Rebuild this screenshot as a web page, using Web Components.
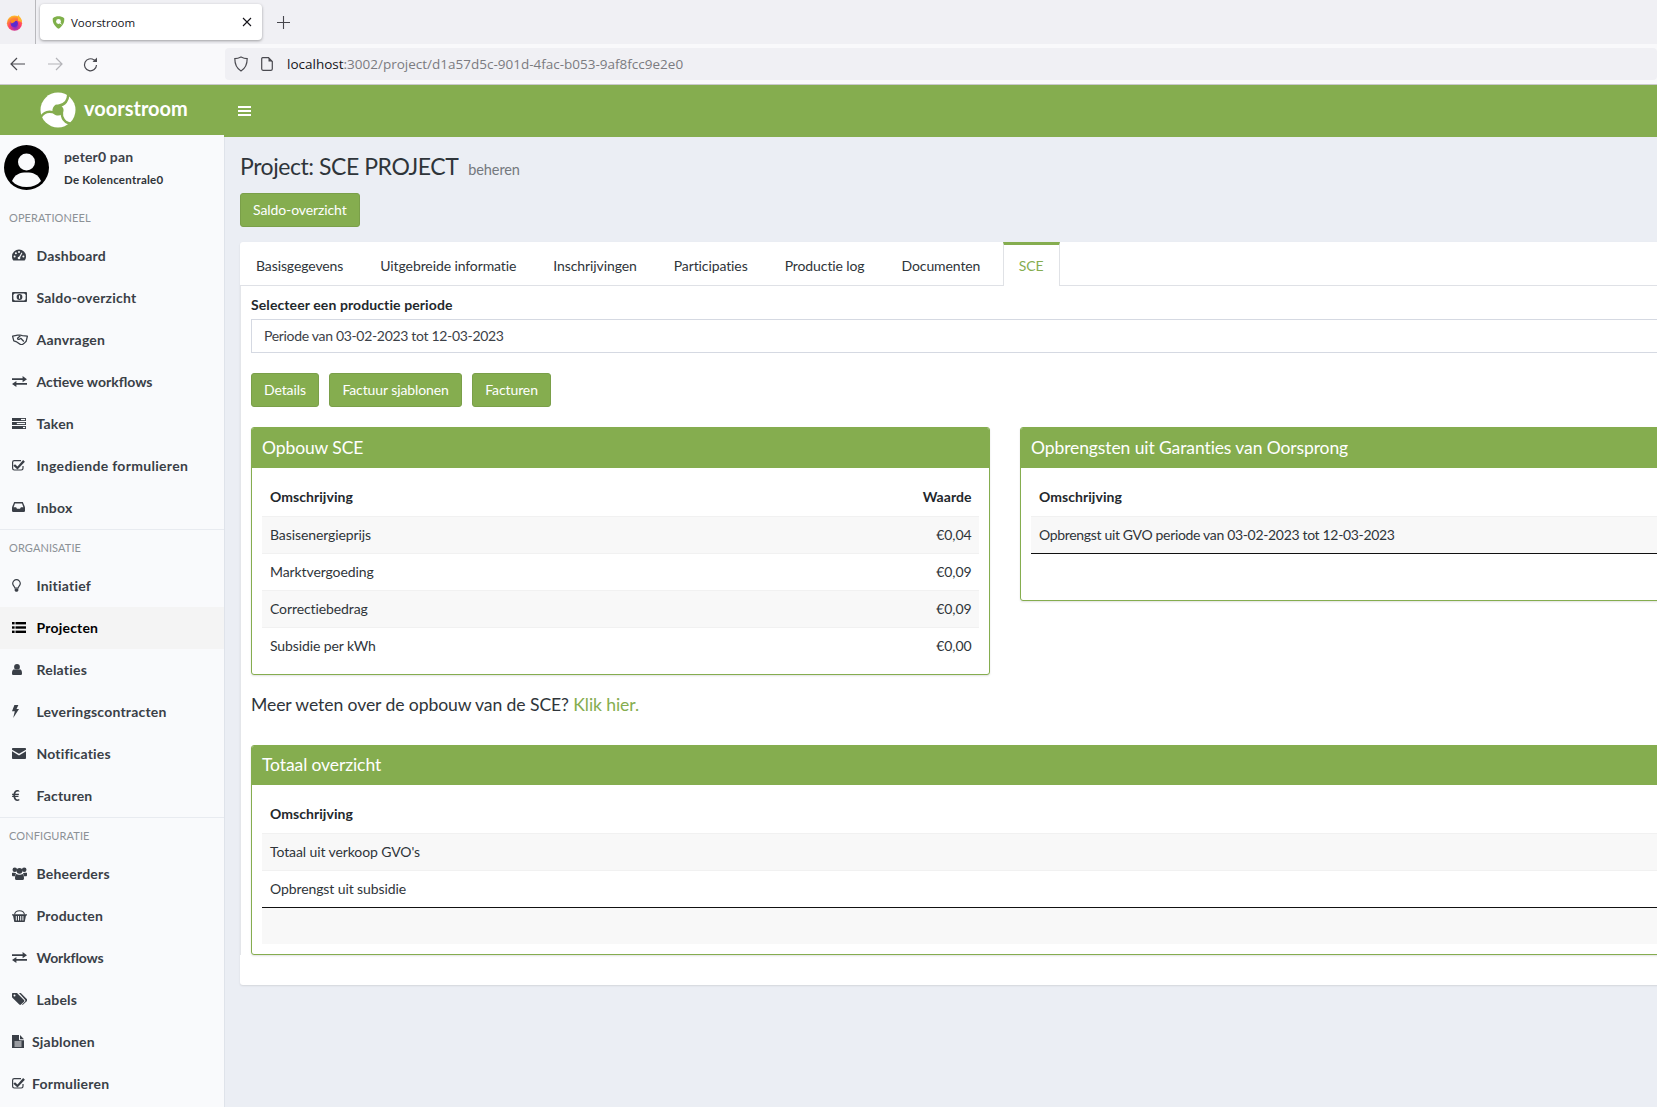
<!DOCTYPE html>
<html lang="nl"><head><meta charset="utf-8"><title>Voorstroom</title>
<style>
html,body{margin:0;padding:0;width:1657px;height:1107px;overflow:hidden;background:#ebeef4}
body{font-family:"Lato","Noto Sans",sans-serif;font-size:14px;color:#2f353a;display:flex;flex-direction:column;letter-spacing:-.1px}
</style></head><body>
<browser-chrome></browser-chrome>
<app-shell>
  <side-nav slot="side">
    <nav-user slot="user" name="peter0 pan" org="De Kolencentrale0"></nav-user>
    <nav-title>OPERATIONEEL</nav-title>
    <nav-item icon="dashboard">Dashboard</nav-item>
    <nav-item icon="money">Saldo-overzicht</nav-item>
    <nav-item icon="handshake">Aanvragen</nav-item>
    <nav-item icon="exchange" style="letter-spacing:0">Actieve workflows</nav-item>
    <nav-item icon="tasks">Taken</nav-item>
    <nav-item icon="check" style="letter-spacing:.3px">Ingediende formulieren</nav-item>
    <nav-item icon="inbox">Inbox</nav-item>
    <nav-title rule>ORGANISATIE</nav-title>
    <nav-item icon="bulb">Initiatief</nav-item>
    <nav-item icon="list" active>Projecten</nav-item>
    <nav-item icon="user">Relaties</nav-item>
    <nav-item icon="bolt">Leveringscontracten</nav-item>
    <nav-item icon="envelope">Notificaties</nav-item>
    <nav-item icon="euro">Facturen</nav-item>
    <nav-title rule>CONFIGURATIE</nav-title>
    <nav-item icon="users">Beheerders</nav-item>
    <nav-item icon="basket">Producten</nav-item>
    <nav-item icon="exchange" style="letter-spacing:-.15px">Workflows</nav-item>
    <nav-item icon="tags">Labels</nav-item>
    <nav-item icon="file" tight>Sjablonen</nav-item>
    <nav-item icon="check" tight>Formulieren</nav-item>
  </side-nav>
  <page-title sub="beheren">Project: SCE PROJECT</page-title>
  <green-btn>Saldo-overzicht</green-btn>
  <tab-card>
    <tab-item slot="tabs">Basisgegevens</tab-item>
    <tab-item slot="tabs">Uitgebreide informatie</tab-item>
    <tab-item slot="tabs">Inschrijvingen</tab-item>
    <tab-item slot="tabs">Participaties</tab-item>
    <tab-item slot="tabs">Productie log</tab-item>
    <tab-item slot="tabs">Documenten</tab-item>
    <tab-item slot="tabs" active>SCE</tab-item>

    <period-select label="Selecteer een productie periode">Periode van 03-02-2023 tot 12-03-2023</period-select>
    <btn-row><green-btn>Details</green-btn><green-btn>Factuur sjablonen</green-btn><green-btn>Facturen</green-btn></btn-row>
    <panel-row>
      <green-panel heading="Opbouw SCE">
        <t-row head><t-cell>Omschrijving</t-cell><t-cell end>Waarde</t-cell></t-row>
        <t-row odd><t-cell>Basisenergieprijs</t-cell><t-cell end>€0,04</t-cell></t-row>
        <t-row><t-cell>Marktvergoeding</t-cell><t-cell end>€0,09</t-cell></t-row>
        <t-row odd><t-cell>Correctiebedrag</t-cell><t-cell end>€0,09</t-cell></t-row>
        <t-row><t-cell>Subsidie per kWh</t-cell><t-cell end>€0,00</t-cell></t-row>
      </green-panel>
      <green-panel heading="Opbrengsten uit Garanties van Oorsprong">
        <t-row head><t-cell>Omschrijving</t-cell></t-row>
        <t-row odd><t-cell style="letter-spacing:-.33px">Opbrengst uit GVO periode van 03-02-2023 tot 12-03-2023</t-cell></t-row>
        <t-row total></t-row>
      </green-panel>
    </panel-row>
    <info-line>Meer weten over de opbouw van de SCE? <a slot="link">Klik hier.</a></info-line>
    <green-panel heading="Totaal overzicht" style="--head:39px">
      <t-row head><t-cell>Omschrijving</t-cell></t-row>
      <t-row odd><t-cell>Totaal uit verkoop GVO's</t-cell></t-row>
      <t-row><t-cell>Opbrengst uit subsidie</t-cell></t-row>
      <t-row total odd></t-row>
    </green-panel>
  </tab-card>
</app-shell>
<script>
function def(name,css,html){
  customElements.define(name,class extends HTMLElement{
    connectedCallback(){
      if(this.shadowRoot)return;
      const r=this.attachShadow({mode:'open'});
      const h=typeof html==='function'?html(this):html;
      r.innerHTML='<style>'+css+'</style>'+h;
    }
  });
}
const BG='var(--ibg,#f9fafc)';
const ICONS={
dashboard:[14,12,`<path d="M7 .5A7 7 0 0 0 0 7.5c0 1.6.5 3 1.4 4h11.2c.9-1 1.4-2.4 1.4-4A7 7 0 0 0 7 .5z"/><g fill="${BG}"><circle cx="2.600" cy="7.600" r="1"/><circle cx="3.900" cy="4.200" r="1"/><circle cx="7" cy="2.900" r="1"/><circle cx="11.400" cy="7.600" r="1"/><circle cx="7" cy="9" r="1.300"/><path d="M6.600 8.400 9.600 3.600l.8.4-2.600 5z"/></g>`],
money:[15,10,`<rect width="15" height="10" rx="1"/><rect x="1.400" y="1.400" width="12.200" height="7.200" rx="1.800" fill="${BG}"/><circle cx="7.500" cy="5" r="2.900"/><rect x="7" y="3.400" width="1.100" height="3.300" fill="${BG}"/>`],
handshake:[16,11,`<g fill="none" stroke="currentColor" stroke-width="1.250" stroke-linejoin="round"><path d="M.6 2.200 3.200 1.600 5.600 1.200 8 1l2.400.6 2.400.2 2.600.4-1.200 5-2.400 2.400-1.600 1.100-1.600-.1L4 7.600 1.800 6.800z"/><path d="M8.400 1.800 5.800 4c-.8.9.5 1.900 1.600 1.200l1.400-.9 3 3.200"/></g>`],
exchange:[15,11,`<path d="M0 2.200h10.600V0L15 3.200l-4.400 3.100V4.100H0zM15 6.900H4.400V4.900L0 8l4.400 3V8.800H15z"/>`],
tasks:[14,11,`<rect width="14" height="3"/><rect y="4" width="14" height="3"/><rect y="8" width="14" height="3"/><g fill="${BG}"><rect x="9" y=".9" width="4.100" height="1.200"/><rect x="4.800" y="4.900" width="8.300" height="1.200"/><rect x="11" y="8.900" width="2.100" height="1.200"/></g>`],
check:[13,12,`<path fill="none" stroke="currentColor" stroke-width="1.200" d="M11 6.900V9.300A1.700 1.700 0 0 1 9.300 11H2.300A1.700 1.700 0 0 1 .6 9.300V3.300A1.700 1.700 0 0 1 2.300 1.600H9"/><path d="M3 5.200 5.500 7.600 11.100 1 12.900 2.700 5.500 10.600 1.300 6.800z"/>`],
inbox:[13,10,`<path d="M2.200 0H10.800L13 5.200V8.800A1.200 1.200 0 0 1 11.800 10H1.200A1.200 1.200 0 0 1 0 8.800V5.200z"/><path fill="${BG}" d="M3 1.400H10L11.400 5.200H8.900L8 6.800H5L4.100 5.200H1.600z"/>`],
bulb:[9,13,`<path fill="none" stroke="currentColor" stroke-width="1.200" d="M4.500.7A3.800 3.800 0 0 0 .7 4.500C.7 6.600 2.600 7.400 2.900 9H6.100C6.400 7.400 8.300 6.600 8.300 4.500A3.800 3.800 0 0 0 4.500.7z"/><path d="M2.700 9.500H6.300V11.600L5.400 12.800H3.600L2.700 11.600z"/>`],
list:[14,11,`<rect width="2.600" height="2.400"/><rect y="4.300" width="2.600" height="2.400"/><rect y="8.600" width="2.600" height="2.400"/><rect x="3.500" width="10.500" height="2.400"/><rect x="3.500" y="4.300" width="10.500" height="2.400"/><rect x="3.500" y="8.600" width="10.500" height="2.400"/>`],
user:[10,11,`<circle cx="5" cy="2.900" r="2.900"/><path d="M2 5.200C3 6.300 7 6.300 8 5.200 9.300 5.500 10 7 10 9.400 10 10.400 9.400 11 8.500 11H1.500C.6 11 0 10.400 0 9.400 0 7 .7 5.500 2 5.200z"/>`],
bolt:[7,13,`<path d="M2.400 0H6.400L4.500 3.900H7L1.200 13 2.800 6.200H0z"/>`],
envelope:[14,11,`<path d="M1 0H13C13.600 0 14 .5 14 1V1.700L7 5.800 0 1.700V1C0 .5.4 0 1 0zM0 3.300 7 7.500 14 3.300V10C14 10.500 13.600 11 13 11H1C.4 11 0 10.500 0 10z"/>`],
euro:[8,11,`<path d="M7.600 1.800 7 .4C6.500.2 5.900 0 5.300 0 3.400 0 2 1.400 1.500 3.700H0L.2 4.900H1.300L1.300 5.800H0L.2 7H1.500C2 9.500 3.400 11 5.400 11 6 11 6.800 10.800 7.300 10.600V9C6.800 9.300 6.200 9.400 5.500 9.400 4.400 9.400 3.600 8.500 3.300 7H6.400L6.600 5.800H3.100L3.100 4.900H6.800L7 3.700H3.300C3.700 2.400 4.500 1.600 5.500 1.600 6.300 1.600 7 1.700 7.600 1.800z"/>`],
users:[15,13,`<circle cx="2.800" cy="2.800" r="2.300"/><circle cx="12.200" cy="2.800" r="2.300"/><circle cx="7.500" cy="3.800" r="2.900"/><path d="M0 6C.5 5.500 1.200 5.600 2 5.800 3 6 3.600 6 4 6 3.700 7 3.500 8 3 9.200H.8C.3 9.200 0 8.800 0 8.300zM15 6C14.500 5.500 13.800 5.600 13 5.800 12 6 11.400 6 11 6 11.300 7 11.500 8 12 9.200H14.200C14.700 9.200 15 8.800 15 8.300z"/><path d="M4.400 7C5.500 8 9.500 8 10.600 7 11.600 7.500 12 9 12 11.500 12 12.400 11.400 13 10.600 13H4.400C3.600 13 3 12.400 3 11.500 3 9 3.400 7.500 4.400 7z"/>`],
basket:[15,13,`<path d="M0 5.200H15V6.400H14L12.800 12.400A.8.8 0 0 1 12 13H3A.8.8 0 0 1 2.200 12.400L1 6.400H0z"/><g fill="${BG}"><rect x="3.800" y="7" width="1" height="4.500"/><rect x="6" y="7" width="1" height="4.500"/><rect x="8.200" y="7" width="1" height="4.500"/><rect x="10.400" y="7" width="1" height="4.500"/></g><path fill="none" stroke="currentColor" stroke-width="1.200" d="M2.500 5.500C3.500 .5 11.500 .5 12.500 5.500"/>`],
tags:[15,12,`<path d="M0 1C0 .4.400 0 1 0H5L12 7C12.500 7.500 12.500 8.200 12 8.700L9 11.600C8.500 12.100 7.800 12.100 7.300 11.600L.4 4.800C.1 4.500 0 4.100 0 3.700z"/><circle cx="2.500" cy="2.500" r="1" fill="${BG}"/><path d="M7 0H8.800L15 6.300C15.400 6.700 15.400 7.500 15 7.900L10.600 12 10 11.500 13 8.500C13.500 8 13.500 7.300 13 6.800z"/>`],
file:[12,13,`<path d="M0 0H7V4.500C7 5 7.400 5.300 7.800 5.300H12V13H0z"/><path d="M8 0 12 4.200H8z"/><g fill="${BG}"><rect x="2.500" y="6.500" width="7" height="1"/><rect x="2.500" y="8.500" width="7" height="1"/><rect x="2.500" y="10.500" width="7" height="1"/></g>`]
};
const SLIT='M0-4C6-5 12-9 9.500-19';
const G='#85ad4f';
def('browser-chrome',`
:host{display:block;height:85px;flex:none;font-family:"Open Sans","Noto Sans",sans-serif;color:#15141a;letter-spacing:0}
.strip{height:44px;background:#f0f0f4;display:flex;align-items:flex-start;position:relative}
.ff{width:36px;height:44px;box-sizing:border-box;border-right:1px solid #b8b8bc;display:flex;align-items:center;padding-left:6px;flex:none}
.tab{margin:4px 0 0 4px;width:222px;height:36px;box-sizing:border-box;background:#fff;border-radius:4px;box-shadow:0 1px 3px rgba(0,0,0,.35);display:flex;align-items:center;padding:0 10px 0 12px;font-size:11.500px}
.tab span{margin-left:6px;flex:1}
.plus{margin:16px 0 0 15px}
.nav{height:40px;background:#f9f9fb;border-bottom:1px solid #c9c9cb;display:flex;align-items:center;position:relative}
.nav svg.b{position:absolute;top:13px}
.url{position:absolute;left:225px;right:0;top:4px;height:32px;background:#f0f0f4;border-radius:4px;display:flex;align-items:center;font-size:13.500px;white-space:nowrap;color:#7b7b80}
.url b{font-weight:400;color:#15141a}
`,`<div class="strip"><div class="ff"><svg width="17" height="17" viewBox="0 0 17 17"><defs><radialGradient id="f" cx=".55" cy=".75" r=".8"><stop offset="0" stop-color="#7a2dd0"/><stop offset=".45" stop-color="#ff3a6e"/><stop offset=".8" stop-color="#ff9a2a"/><stop offset="1" stop-color="#ffd23a"/></radialGradient></defs><circle cx="8.500" cy="9.200" r="7.600" fill="url(#f)"/><path d="M12 .8C13.500 3 16 4.500 16 8L12 7z" fill="#ffb52e"/><circle cx="8.300" cy="9.500" r="3.600" fill="#5b2ad0"/><path d="M4.500 6.500C6 4.500 10 5 11.500 7 10 6.500 9 7 8.500 8L5.500 9.500z" fill="#ff8a1f"/></svg></div>
<div class="tab"><svg width="13" height="13" viewBox="0 0 13 13"><path d="M.8 2.200C2.500.8 4.500.2 6.500.2S10.500.8 12.200 2.200C12.800 6.500 10.300 10.500 6.500 12.800 2.700 10.500.2 6.500.8 2.200z" fill="#7fb04a"/><circle cx="6.500" cy="5.500" r="2.400" fill="#fff"/><path d="M7.500 6.500 9.500 8.200" stroke="#fff" stroke-width="1"/></svg><span>Voorstroom</span><svg width="10" height="10" viewBox="0 0 10 10" stroke="#15141a" stroke-width="1.100"><path d="M1 1 9 9M9 1 1 9"/></svg></div>
<svg class="plus" width="13" height="13" viewBox="0 0 13 13" stroke="#46464c" stroke-width="1.100"><path d="M6.500 0V13M0 6.500H13"/></svg></div>
<div class="nav">
<svg class="b" style="left:10px" width="16" height="14" viewBox="0 0 16 14" fill="none" stroke="#4a4a50" stroke-width="1.200"><path d="M15 7H1M7 1 1 7 7 13"/></svg>
<svg class="b" style="left:47px" width="16" height="14" viewBox="0 0 16 14" fill="none" stroke="#b4b4b8" stroke-width="1.200"><path d="M1 7H15M9 1 15 7 9 13"/></svg>
<svg class="b" style="left:83px" width="15" height="15" viewBox="0 0 15 15" fill="none" stroke="#4a4a50" stroke-width="1.200"><path d="M13.500 8A6 6 0 1 1 11 2.900L13.500 4"/><path d="M14 .5V5H9.500" fill="#4a4a50" stroke="none"/></svg>
<div class="url"><svg style="margin-left:9px" width="14" height="16" viewBox="0 0 14 16" fill="none" stroke="#4a4a50" stroke-width="1.200"><path d="M7 1C5 2 3 2.600 .8 2.600.8 8 2.500 12.500 7 15 11.500 12.500 13.200 8 13.200 2.600 11 2.600 9 2 7 1z"/></svg><svg style="margin-left:13px" width="12" height="14" viewBox="0 0 12 14" fill="none" stroke="#4a4a50" stroke-width="1.200"><path d="M1.600.7H7.500L11.300 4.500V12A1.400 1.400 0 0 1 9.900 13.300H2A1.400 1.400 0 0 1 .7 12V1.600A1 1 0 0 1 1.600.7z"/><path d="M7.500.7V4.500H11.300" fill="#4a4a50" stroke="none"/></svg><span style="margin-left:14px"><b>localhost</b>:3002/project/d1a57d5c-901d-4fac-b053-9af8fcc9e2e0</span></div></div>`);
def('app-shell',`
:host{display:flex;flex:1;min-height:0}
.side{width:225px;flex:none;box-sizing:border-box;border-right:1px solid #dfe3ea;background:#f9fafc;overflow:hidden}
.logo{height:50px;background:#85ad4f;display:flex;align-items:center;color:#fff;font:700 20px "Lato",sans-serif;padding-left:39px;box-sizing:border-box;width:225px;margin-right:-1px}
.logo span{margin-left:7px;letter-spacing:0;margin-top:-5px}
.main{flex:none;width:1550px}
.bar{height:52px;background:#85ad4f;display:flex;align-items:center;padding-left:14px;margin-left:-1px}
.content{padding:14px 0 0 15px;display:flex;flex-direction:column;align-items:flex-start}
`,`<div class="side"><div class="logo"><svg width="38" height="38" viewBox="-19 -19 38 38"><circle r="17.500" fill="#fff"/><path d="M-1-5.500C3-5.500 6-2.500 5.500 1 5 4.500 2 6-1 5.500-4 5-6 2.500-5.500-.5-5-3.500-3-5.500-1-5.500z" fill="${G}"/><g fill="none" stroke="${G}" stroke-width="2.400"><path d="${SLIT}"/><path d="${SLIT}" transform="rotate(105)"/><path d="${SLIT}" transform="rotate(215)"/></g></svg><span>voorstroom</span></div><slot name="side"></slot></div>
<div class="main"><div class="bar"><svg width="13" height="10" viewBox="0 0 13 10" fill="#fff"><rect width="13" height="2"/><rect y="4" width="13" height="2"/><rect y="8" width="13" height="2"/></svg></div><div class="content"><slot></slot></div></div>`);
def('side-nav',`:host{display:block}`,`<slot name="user"></slot><slot></slot>`);
def('nav-user',`
:host{display:flex;height:65px;box-sizing:border-box;padding:10px 0 0 4px;color:#3c4149}
svg{flex:none}
.t{margin-left:15px;display:flex;flex-direction:column}
.n{font-weight:700;font-size:14px;line-height:24px;letter-spacing:.15px}
.o{font-weight:700;font-size:11.500px;line-height:22px;color:#2f3338;letter-spacing:.25px}
`,h=>`<svg width="45" height="45" viewBox="0 0 45 45"><circle cx="22.500" cy="22.500" r="22.500" fill="#000"/><circle cx="22.500" cy="17" r="8.500" fill="#f9fafc"/><path d="M8 36C11 29 16 27.500 22.500 27.500S34 29 37 36C33.500 40 28.500 42 22.500 42S11.500 40 8 36z" fill="#f9fafc"/></svg><div class="t"><span class="n">${h.getAttribute('name')}</span><span class="o">${h.getAttribute('org')}</span></div>`);
def('nav-title',`
:host{display:flex;align-items:center;height:35px;padding-left:9px;font-size:11px;color:#8c9196;letter-spacing:.1px}
:host([rule]){border-top:1px solid #e8ebf0;}
`,`<slot></slot>`);
def('nav-item',`
:host{display:flex;align-items:center;height:42px;padding:0 0 2px 12px;font-weight:700;font-size:14px;letter-spacing:.2px;color:#3a3f47;box-sizing:border-box;--ibg:#f9fafc;width:224px}
:host([active]){background:#f4f4f4;color:#000;--ibg:#f4f4f4}
.i{width:24.500px;flex:none;display:flex;align-items:center}
:host([tight]) .i{width:20px}
svg{fill:currentColor;display:block}
`,h=>{const k=ICONS[h.getAttribute('icon')];return `<span class="i"><svg width="${k[0]}" height="${k[1]}" viewBox="0 0 ${k[0]} ${k[1]}">${k[2]}</svg></span><slot></slot>`});
def('page-title',`
:host{display:flex;align-items:baseline;height:30px;font-size:23px;letter-spacing:-.45px;color:#2f353a;margin-bottom:12px;line-height:30px}
small{font-size:14.500px;letter-spacing:-.1px;color:#73787d;margin-left:10px}
`,h=>`<slot></slot><small>${h.getAttribute('sub')}</small>`);
def('green-btn',`
:host{display:inline-flex;align-items:center;height:34px;box-sizing:border-box;padding:0 12px 2px;background:#85ad4f;border:1px solid #7a9f49;border-radius:3px;color:#fff;font-size:14px}
`,`<slot></slot>`);
def('btn-row',`:host{display:flex;gap:10.500px;margin:20px 0}`,`<slot></slot>`);
def('tab-card',`
:host{display:block;width:1528px;box-sizing:border-box;background:#fff;border-radius:3px;margin-top:15px;box-shadow:0 1px 2px rgba(0,0,0,.1);padding-bottom:30px}
.tabs{display:flex;height:44px;box-sizing:border-box;border-bottom:1px solid #dfe1e6;gap:5px}
.body{padding:0 11px 0 10px;border-left:1px solid #e4e6ea}
`,`<div class="tabs"><slot name="tabs"></slot></div><div class="body"><slot></slot></div>`);
def('tab-item',`
:host{display:flex;align-items:center;height:43px;padding:3px 16px 0;box-sizing:border-box;color:#2f353a;font-size:14px;white-space:nowrap}
:host([active]){color:#85ad4f;border-top:3px solid #85ad4f;border-left:1px solid #e0e2e6;border-right:1px solid #e0e2e6;height:44px;background:#fff;padding:0 15px;margin-left:1.500px}
`,`<slot></slot>`);
def('period-select',`
:host{display:block;padding-top:9px}
.l{display:block;font-weight:700;line-height:20px;margin-bottom:4px;color:#23282c;letter-spacing:.1px}
.s{display:flex;align-items:center;height:34px;box-sizing:border-box;border:1px solid #d5d9e2;padding:0 0 2px 12px;color:#3c4147;width:1506px;letter-spacing:-.32px}
`,h=>`<span class="l">${h.getAttribute('label')}</span><div class="s"><slot></slot></div>`);
def('panel-row',`:host{display:grid;grid-template-columns:739px 737px;gap:30px;align-items:start}`,`<slot></slot>`);
def('green-panel',`
:host{display:block;box-sizing:border-box;border:1px solid #85ad4f;border-radius:3px;overflow:hidden;box-shadow:0 1px 2px rgba(0,0,0,.12);background:#fff}
.h{height:var(--head,40px);box-sizing:border-box;padding:0 0 2px 10px;background:#85ad4f;color:#fff;font-size:17.500px;display:flex;align-items:center}
.b{padding:11px 10px 10px}
`,h=>`<div class="h">${h.getAttribute('heading')}</div><div class="b"><slot></slot></div>`);
def('t-row',`
:host{display:flex;height:37px;box-sizing:border-box;align-items:center;border-top:1px solid #f1f1f1;padding:0 7.500px 2px 8px;color:#2f353a}
:host([head]){border-top:0;font-weight:700;color:#23282c;letter-spacing:.05px}
:host([odd]){background:#f8f8f8}
:host([total]){border-top:1.500px solid #111}
`,`<slot></slot>`);
def('t-cell',`:host{flex:1}:host([end]){text-align:right}`,`<slot></slot>`);
def('info-line',`
:host{display:block;font-size:17.600px;line-height:26px;margin:17px 0 27px;color:#2f353a}
::slotted(a){color:#85ad4f}
`,`<slot></slot><slot name="link"></slot>`);
</script>
</body></html>
